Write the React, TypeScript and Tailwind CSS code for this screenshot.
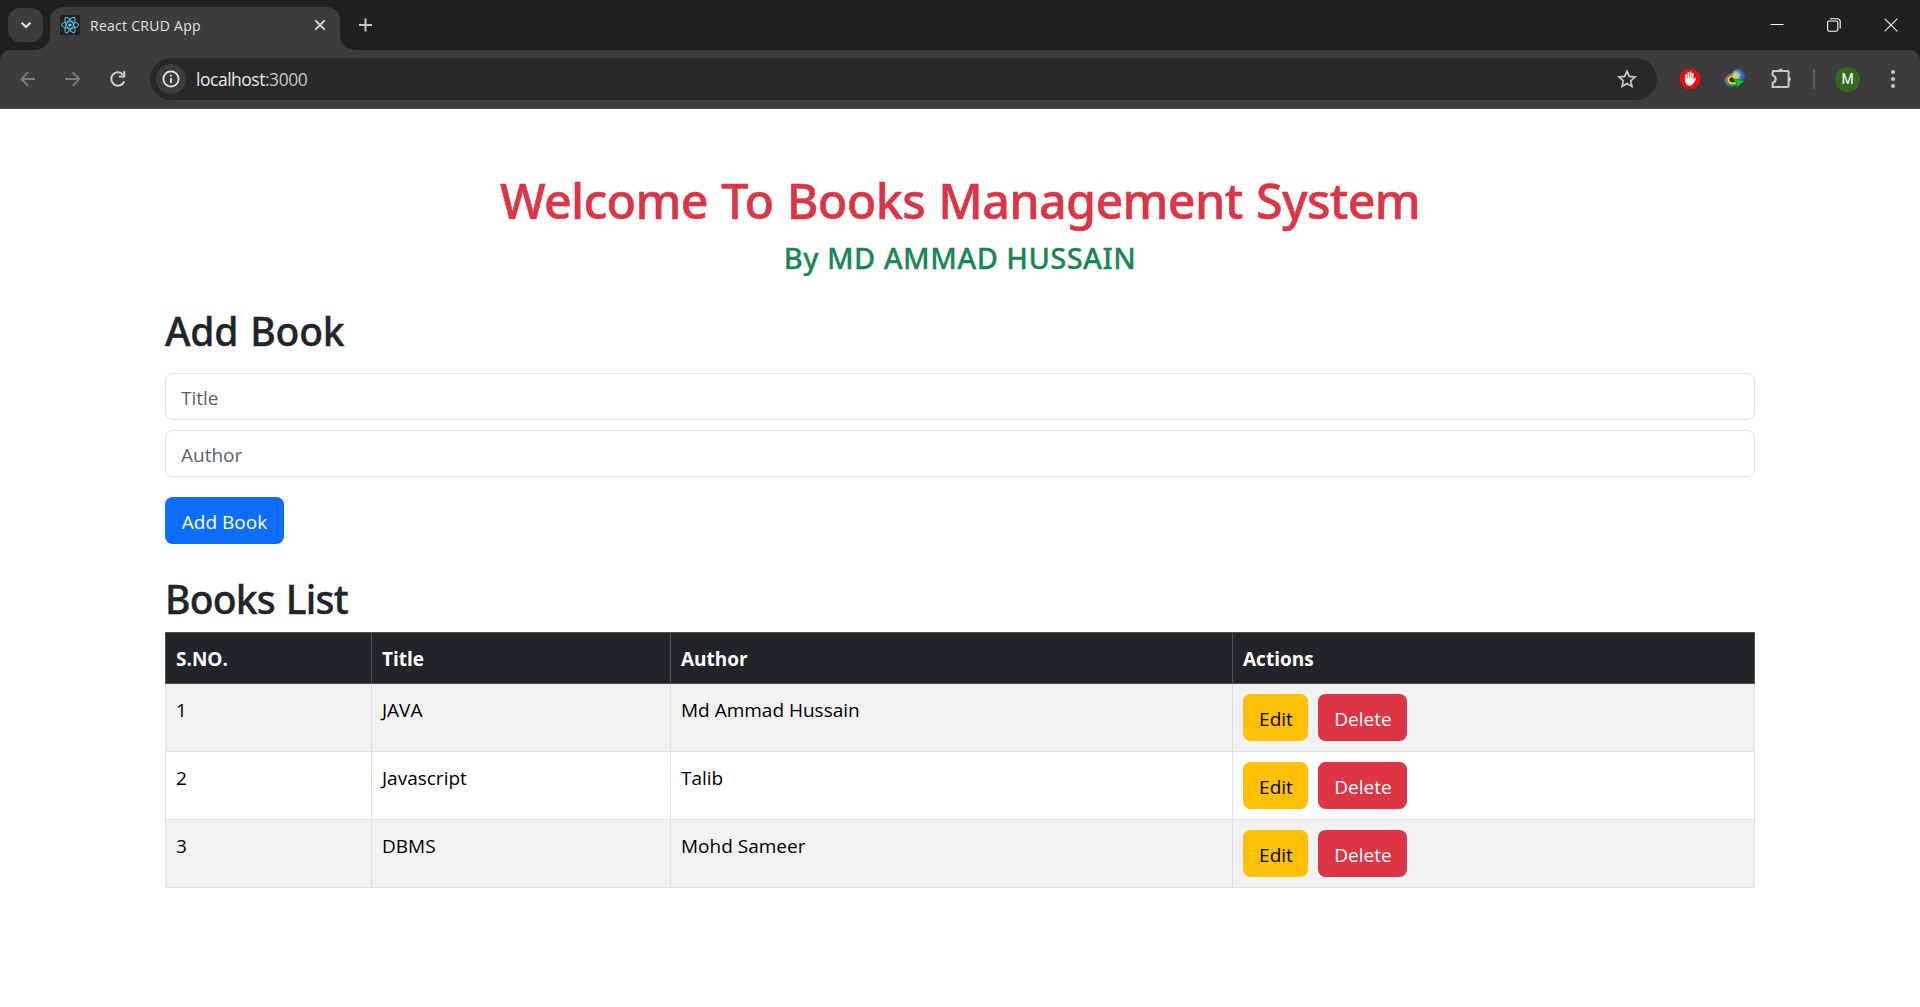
import type { ReactNode } from "react";

const books = [
  { title: "JAVA", author: "Md Ammad Hussain" },
  { title: "Javascript", author: "Talib" },
  { title: "DBMS", author: "Mohd Sameer" },
];

function ReactLogo() {
  return (
    <svg width="20" height="20" viewBox="0 0 20 20" fill="none" stroke="#53c1de" strokeWidth="1">
      <rect width="20" height="20" rx="1.5" fill="#222222" stroke="none" />
      <ellipse cx="10" cy="10" rx="8.6" ry="3.3" />
      <ellipse cx="10" cy="10" rx="8.6" ry="3.3" transform="rotate(60 10 10)" />
      <ellipse cx="10" cy="10" rx="8.6" ry="3.3" transform="rotate(120 10 10)" />
      <circle cx="10" cy="10" r="1.6" fill="#61dafb" stroke="none" />
    </svg>
  );
}

function TabFlare({ className }: { className: string }) {
  return (
    <svg className={className} width="15" height="15" viewBox="0 0 15 15" fill="#3c3c3c">
      <path d="M15 0 V15 H0 A15 15 0 0 0 15 0 Z" />
    </svg>
  );
}

function TabStrip() {
  return (
    <div className="flex h-[50px] items-end bg-[#1f2120]">
      <div className="mb-2 ml-2 flex h-[34px] w-[35px] items-center justify-center rounded-[12px] bg-[#3c3c3c]">
        <svg width="14" height="14" viewBox="0 0 14 14" fill="none" stroke="#e6e6e6" strokeWidth="2.2">
          <path d="M2.6 4.7 L7 9 L11.4 4.7" />
        </svg>
      </div>
      <div className="relative ml-[7px] flex h-[43px] w-[290px] items-center rounded-t-[13px] bg-[#3c3c3c] pb-[7px] pl-[10px] pr-[14px]">
        <TabFlare className="absolute -left-[15px] bottom-0" />
        <TabFlare className="absolute -right-[15px] bottom-0 -scale-x-100" />
        <ReactLogo />
        <span className="ml-[10px] mt-px flex-1 text-[14px] leading-5 tracking-[0.27px] text-[#e3e3e3]">React CRUD App</span>
        <svg width="12" height="12" viewBox="0 0 12 12" stroke="#e0e0e0" strokeWidth="1.8">
          <path d="M1.3 1.3 L10.7 10.7 M10.7 1.3 L1.3 10.7" />
        </svg>
      </div>
      <svg className="mb-[18px] ml-[19px]" width="13" height="14" viewBox="0 0 13 14" stroke="#c7c7c7" strokeWidth="2">
        <path d="M6.5 0.5 V13.5 M0 7 H13" />
      </svg>
      <div className="mb-[18px] ml-auto mr-[22px] flex items-center gap-[43px]">
        <svg width="14" height="14" viewBox="0 0 14 14" stroke="#ffffff" strokeWidth="1">
          <path d="M0.5 6.5 H13.5" />
        </svg>
        <svg width="14" height="14" viewBox="0 0 14 14" fill="none" stroke="#ffffff" strokeWidth="1.1">
          <rect x="0.6" y="3" width="10.2" height="10.2" rx="1.6" />
          <path d="M3 0.8 H10.4 A2.8 2.8 0 0 1 13.2 3.6 V10.6" />
        </svg>
        <svg width="14" height="14" viewBox="0 0 14 14" stroke="#e8e8e8" strokeWidth="1.2">
          <path d="M0.6 0.6 L13.4 13.4 M13.4 0.6 L0.6 13.4" />
        </svg>
      </div>
    </div>
  );
}

function BlockerIcon() {
  return (
    <svg width="22" height="22" viewBox="0 0 22 22">
      <path d="M6.8 1 H15.2 L21.2 6.9 V15.1 L15.2 21 H6.8 L0.8 15.1 V6.9 Z" fill="#e90c0c" />
      <g stroke="#ffffff" strokeWidth="1.7" strokeLinecap="round" fill="none">
        <path d="M7.2 6.8 V13 M9.4 4.8 V12 M11.6 4.4 V12 M13.7 5.8 V13 M16.2 11 L14 14.6" />
      </g>
      <path d="M6.4 10.5 H14.5 V14 Q13.9 17.7 10.8 17.7 Q7 17.7 6.4 14 Z" fill="#ffffff" />
    </svg>
  );
}

function DownloaderIcon() {
  return (
    <svg width="22" height="22" viewBox="0 0 22 22">
      <defs>
        <radialGradient id="globe" cx="0.32" cy="0.5" r="0.75">
          <stop offset="0" stopColor="#dcd95c" />
          <stop offset="0.3" stopColor="#b9c47c" />
          <stop offset="0.5" stopColor="#477bd2" />
          <stop offset="1" stopColor="#173f9c" />
        </radialGradient>
      </defs>
      <g fill="none" strokeLinecap="round">
        <path d="M9.5 5.6 C3 6.6 0.2 10.8 1.6 14.4 C3.2 17.8 8 18.6 12 16.8" stroke="#2a6fd0" strokeWidth="1.8" />
        <path d="M9 6.7 C4 7.6 1.8 11 3 13.9 C4.8 16.8 9 17.2 12 15.8" stroke="#36b224" strokeWidth="1.8" />
        <path d="M9 7.8 C5.2 8.6 3.6 10.8 4.6 13 C5.8 15.2 9 15.6 11.5 14.8" stroke="#f1dc27" strokeWidth="1.6" />
        <path d="M8.6 6.2 C5 7.2 2.4 9.4 2.2 12" stroke="#e25426" strokeWidth="1.5" />
      </g>
      <ellipse cx="9" cy="12" rx="3.1" ry="2.2" fill="#202820" />
      <circle cx="14.4" cy="7.6" r="6.7" fill="url(#globe)" />
      <path d="M8.8 10.8 L20.6 12.8 L12.8 19.4 L12.8 15.4 Z" fill="#17c21c" stroke="#0b6e12" strokeWidth="0.5" />
    </svg>
  );
}

function Toolbar() {
  return (
    <div className="bg-[#1f2120]">
      <div className="flex h-[59px] items-center rounded-t-[10px] border-b border-[#4a4a4a] bg-[#3c3c3c] pl-5">
        <svg width="16" height="16" viewBox="0 0 16 16" fill="none" stroke="#7c7c7c" strokeWidth="1.8">
          <path d="M15 8 H1.6 M8.2 1.2 L1.5 8 L8.2 14.8" />
        </svg>
        <svg className="ml-[29px]" width="16" height="16" viewBox="0 0 16 16" fill="none" stroke="#7c7c7c" strokeWidth="1.8">
          <path d="M0 8 H14.2 M7.6 1.2 L14.3 8 L7.6 14.8" />
        </svg>
        <svg className="ml-[28px]" width="18" height="18" viewBox="0 0 18 18" fill="none" stroke="#d0d0d0" strokeWidth="2">
          <path d="M15.2 11.3 A6.7 6.7 0 1 1 14 4.6" />
          <path d="M15.2 1.2 V6.5 H9.8" />
        </svg>
        <div className="ml-[23px] flex h-[42px] w-[1507px] items-center rounded-full bg-[#282828] pl-[6px] pr-5">
          <div className="flex size-[30px] items-center justify-center rounded-full bg-[#3c3c3c]">
            <svg width="18" height="18" viewBox="0 0 18 18" fill="none" stroke="#e3e3e3" strokeWidth="1.8">
              <circle cx="9" cy="9" r="7.6" />
              <path d="M9 8 V13 M9 4.8 V6.6" />
            </svg>
          </div>
          <span className="ml-[10px] flex-1 text-[17.5px] leading-6 tracking-[-0.48px] text-[#e8e8e8]">
            localhost<span className="text-[#c7c7c7]">:3000</span>
          </span>
          <svg width="20" height="20" viewBox="0 0 20 20" fill="none" stroke="#c7c7c7" strokeWidth="1.7">
            <path d="M10 2 L12.3 7.4 L18.1 7.9 L13.7 11.8 L15 17.5 L10 14.5 L5 17.5 L6.3 11.8 L1.9 7.9 L7.7 7.4 Z" />
          </svg>
        </div>
        <div className="flex flex-1 items-center pl-[22px]">
          <BlockerIcon />
          <div className="ml-[23px] flex">
            <DownloaderIcon />
          </div>
          <svg className="ml-[22px]" width="26" height="26" viewBox="0 0 26 26">
            <path
              d="M5.6 5 H19.6 Q20.6 5 20.6 6 V20 Q20.6 21 19.6 21 H4.6 V16.8 A3.9 3.9 0 0 0 4.6 9.2 V6 Q4.6 5 5.6 5 Z"
              fill="none"
              stroke="#c7c7c7"
              strokeWidth="2"
            />
            <path d="M10 5 A2.7 2.7 0 0 1 15.2 5 Z M20.6 10.4 A2.7 2.7 0 0 1 20.6 15.6 Z" fill="#c7c7c7" stroke="#c7c7c7" strokeWidth="0.6" />
          </svg>
          <div className="ml-[19px] h-5 w-[2px] bg-[#5c5c5c]" />
          <div className="ml-[20px] flex size-[25px] items-center justify-center rounded-full bg-[#33691e] font-[Roboto] text-[14px] leading-none text-white">
            M
          </div>
          <svg className="ml-[30px]" width="6" height="20" viewBox="0 0 6 20" fill="#c7c7c7">
            <circle cx="3" cy="3" r="2" />
            <circle cx="3" cy="10" r="2" />
            <circle cx="3" cy="17" r="2" />
          </svg>
        </div>
      </div>
    </div>
  );
}

function Button({ className, children }: { className: string; children: ReactNode }) {
  return (
    <button className={`flex h-[47px] items-center justify-center rounded-[7.5px] pt-[2px] text-[19px] leading-[30px] ${className}`}>
      {children}
    </button>
  );
}

const inputClass =
  "h-[47px] w-full rounded-[7.5px] border border-[#dee2e6] bg-white px-[15px] pt-[2px] text-[19px] leading-[30px] placeholder:text-[#5d6368] outline-none";
const headClass = "border border-[#4d5154] pl-[10px] pt-px text-left font-bold";
const textCellClass = "border border-[#dee2e6] pl-[10px] pt-[11px] align-top";

export default function App() {
  return (
    <div className="h-[1007px] w-[1920px] overflow-hidden bg-white font-['Open_Sans',sans-serif]">
      <TabStrip />
      <Toolbar />
      <main className="mx-auto w-[1590px] pt-[61px] text-[#212529]">
        <header className="text-center font-['Noto_Sans',sans-serif] font-medium">
          <h1 className="text-[48.5px] leading-[60px] tracking-[-0.68px] text-[#dc3545] [-webkit-text-stroke:0.5px_#dc3545] [word-spacing:1.4px]">
            Welcome To Books Management System
          </h1>
          <h4 className="mt-[10px] text-[29px] leading-[36px] tracking-[0.45px] text-[#198754] [-webkit-text-stroke:0.3px_#198754]">
            By MD AMMAD HUSSAIN
          </h4>
        </header>
        <section>
          <h2 className="mt-[31px] font-['Noto_Sans',sans-serif] text-[39px] font-medium leading-[48px] tracking-[-0.2px] [-webkit-text-stroke:0.4px_#212529] [word-spacing:2px]">
            Add Book
          </h2>
          <form className="mt-[18px] flex flex-col gap-[10px]">
            <input className={inputClass} placeholder="Title" />
            <input className={inputClass} placeholder="Author" />
            <Button className="mt-[10px] w-[119px] bg-[#0d6efd] text-white">Add Book</Button>
          </form>
        </section>
        <section className="mt-[31px]">
          <h2 className="font-['Noto_Sans',sans-serif] text-[39px] font-medium leading-[48px] tracking-[-0.8px] [-webkit-text-stroke:0.4px_#212529] [word-spacing:1.5px]">
            Books List
          </h2>
          <table className="mt-[9px] w-[1590px] table-fixed border-collapse text-[19px] leading-[30px]">
            <colgroup>
              <col className="w-[206px]" />
              <col className="w-[299px]" />
              <col className="w-[562px]" />
              <col className="w-[522px]" />
            </colgroup>
            <thead>
              <tr className="h-[51px] bg-[#212529] text-white">
                <th className={headClass}>S.NO.</th>
                <th className={headClass}>Title</th>
                <th className={headClass}>Author</th>
                <th className={headClass}>Actions</th>
              </tr>
            </thead>
            <tbody className="text-black">
              {books.map((book, i) => (
                <tr key={book.title} className="h-[68px] odd:bg-[#f2f2f2]">
                  <td className={textCellClass}>{i + 1}</td>
                  <td className={textCellClass}>{book.title}</td>
                  <td className={textCellClass}>{book.author}</td>
                  <td className="border border-[#dee2e6] pl-[10px] pt-[10px] align-top">
                    <div className="flex gap-[10px]">
                      <Button className="w-[65px] bg-[#ffc107] pl-px text-black">Edit</Button>
                      <Button className="w-[89px] bg-[#dc3545] pl-px text-white">Delete</Button>
                    </div>
                  </td>
                </tr>
              ))}
            </tbody>
          </table>
        </section>
      </main>
    </div>
  );
}
